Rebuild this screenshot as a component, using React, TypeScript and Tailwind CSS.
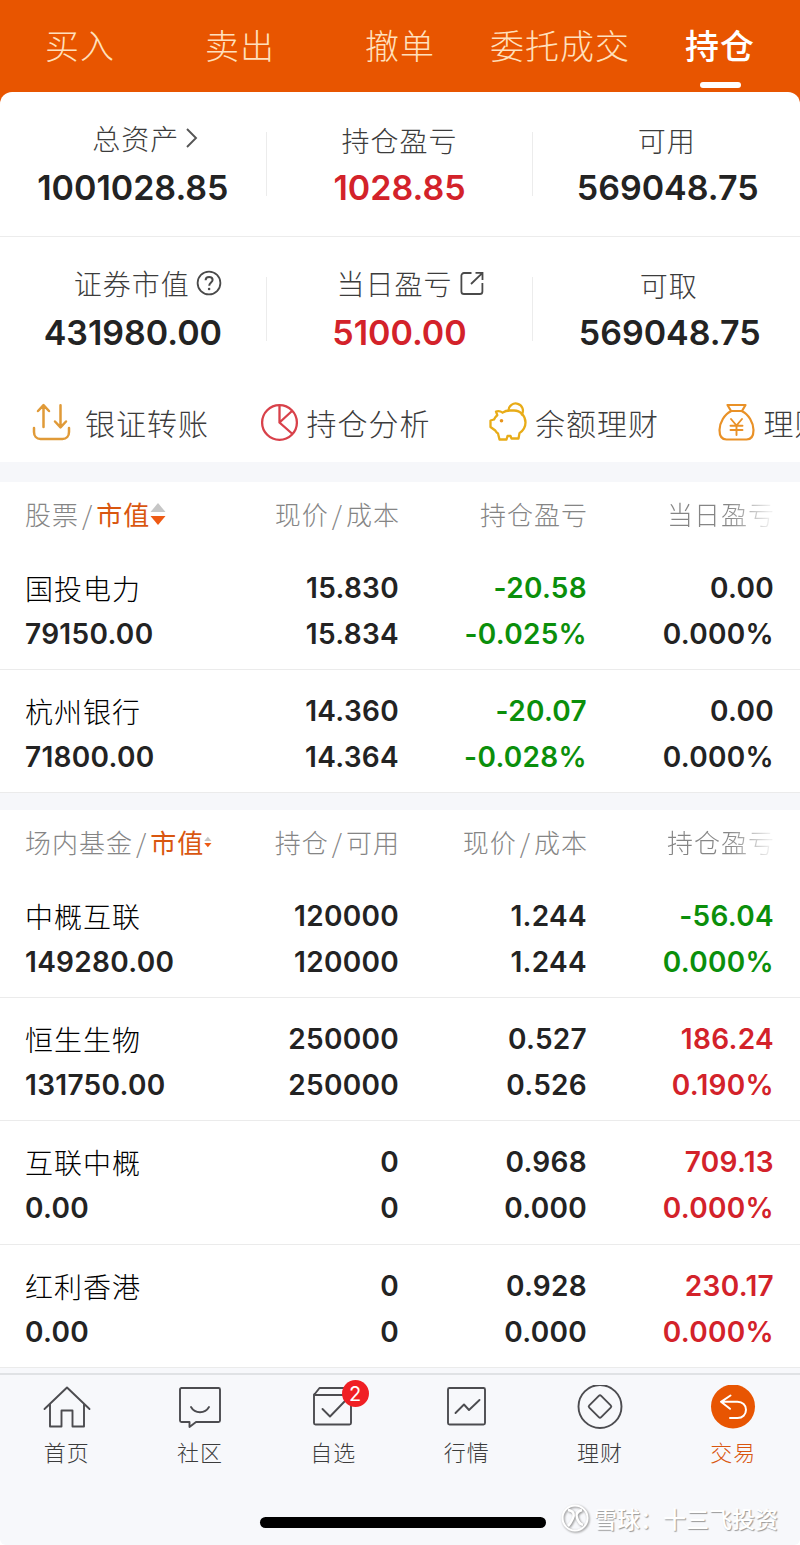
import React from 'react';

const CJK = "font-['Noto_Sans_CJK_SC',sans-serif]";
const NUM = "font-['Inter','Noto_Sans_CJK_SC',sans-serif]";

const tabs = ['买入', '卖出', '撤单', '委托成交', '持仓'];

function Chevron() {
  return (
    <svg width="14" height="20" viewBox="0 0 14 20" fill="none" stroke="#555" strokeWidth="1.9" className="ml-1.5">
      <path d="M2 1l9 9-9 9" />
    </svg>
  );
}

function Help() {
  return (
    <svg width="26" height="26" viewBox="0 0 26 26" fill="none" stroke="#4a4a4a" strokeWidth="1.8" className="ml-1.5">
      <circle cx="13" cy="13" r="11.4" />
      <path d="M9.6 10.3c0-2 1.5-3.3 3.5-3.3s3.5 1.3 3.5 3.1c0 2.3-3.4 2.8-3.4 5.6" strokeWidth="2" />
      <circle cx="13.1" cy="19" r="1.3" fill="#4a4a4a" stroke="none" />
    </svg>
  );
}

function External() {
  return (
    <svg width="26" height="26" viewBox="0 0 26 26" fill="none" stroke="#4a4a4a" strokeWidth="1.8" className="ml-1.5">
      <path d="M12.5 3H5a2.6 2.6 0 0 0-2.6 2.6v15.8A2.6 2.6 0 0 0 5 24h15.8a2.6 2.6 0 0 0 2.6-2.6V13" />
      <path d="M16.5 2.8h7V10M23 3.3L12 14" />
    </svg>
  );
}

type Stat = { label: string; value: string; red?: boolean; icon?: React.ReactNode; labelPad: string; valuePad: string };

const statRows: Stat[][] = [
  [
    { label: '总资产', value: '1001028.85', icon: <Chevron />, labelPad: 'pl-[26px] pb-1', valuePad: '' },
    { label: '持仓盈亏', value: '1028.85', red: true, labelPad: '', valuePad: '' },
    { label: '可用', value: '569048.75', labelPad: '', valuePad: 'pl-0.5' },
  ],
  [
    { label: '证券市值', value: '431980.00', icon: <Help />, labelPad: 'pl-[30px] pb-1', valuePad: '' },
    { label: '当日盈亏', value: '5100.00', red: true, icon: <External />, labelPad: 'pl-[22px] pb-1', valuePad: '' },
    { label: '可取', value: '569048.75', labelPad: 'pl-1', valuePad: 'pl-1.5' },
  ],
];

function StatRow({ row }: { row: Stat[] }) {
  return (
    <div className="grid grid-cols-3">
      {row.map((s, i) => (
        <div key={s.label} className="flex h-[144px] items-center">
          <div className="flex flex-1 flex-col items-center">
            <div className={`flex h-12 items-center text-[28px] font-light leading-none tracking-[1px] text-[#3c3c3c] ${s.labelPad}`}>
              <span>{s.label}</span>
              {s.icon}
            </div>
            <div className={`flex h-12 items-center ${NUM} text-[34px] font-semibold leading-none ${s.red ? 'text-[#d3222a]' : 'text-[#232323]'} ${s.valuePad}`}>
              {s.value}
            </div>
          </div>
          {i < 2 && <div className="h-16 w-px bg-[#ececec]" />}
        </div>
      ))}
    </div>
  );
}

function TransferIcon() {
  return (
    <svg width="40" height="40" viewBox="0 0 40 40" fill="none" stroke="#e09a38" strokeWidth="2.5" strokeLinecap="round" strokeLinejoin="round">
      <path d="M12.5 25V3.5M7 9l5.500-5.800L18 9M29.500 3.200V25M24 19.500l5.500 5.800 5.500-5.800" />
      <path d="M3 26v4c0 4 2.500 7 6.500 7h22c4 0 6.500-3 6.500-7v-4" />
    </svg>
  );
}

function PieIcon() {
  return (
    <svg width="40" height="40" viewBox="0 0 40 40" fill="none" stroke="#d8414a" strokeWidth="2.300">
      <circle cx="19.500" cy="20.500" r="17.400" />
      <path d="M19.500 3v17.500L32.500 32M19.500 20.500L32 9" />
    </svg>
  );
}

function PiggyIcon() {
  return (
    <svg width="40" height="40" viewBox="0 0 40 40" fill="none" stroke="#e8ac18" strokeWidth="2.300" strokeLinecap="round" strokeLinejoin="round">
      <path d="M8 9.500c2.500-.800 4.800-.200 6.600 1.200 2-1.500 4.500-2.200 7.400-2.200h4c6.500 0 11.500 5.300 11.500 12 0 4.500-2.500 8.200-6 10.600L30.500 36.500h-7L22.500 34h-3l-1 3.500h-7l-1.500-6c-1.200-.800-2-1.700-2.700-3L2.500 25v-6.500L6 17.500c.6-1.700 1.700-3.200 3.300-4.300z" />
      <path d="M20.500 8.500A7.200 7.200 0 1 1 33.800 12.500" />
      <circle cx="13.500" cy="18.700" r="1.800" fill="#e8941c" stroke="none" />
    </svg>
  );
}

function BagIcon() {
  return (
    <svg width="40" height="40" viewBox="0 0 40 40" fill="none" stroke="#e99127" strokeWidth="2.200" strokeLinecap="round" strokeLinejoin="round">
      <path d="M10.500 3h18l-3.500 6H14zM14 9.200C7.500 12 2.500 21 2.500 28c0 6 2.500 9.500 7 9.500h20c4.500 0 7-3.500 7-9.500 0-7-5-16-11.500-18.800" />
      <path d="M14 17l5.500 6.500L25 17M19.500 23.500V33M13.500 23.800h12M13.500 28h12" strokeWidth="1.900" />
    </svg>
  );
}

const actions = [
  { label: '银证转账', icon: <TransferIcon />, gap: 'gap-[14px]' },
  { label: '持仓分析', icon: <PieIcon />, gap: 'gap-[7px]' },
  { label: '余额理财', icon: <PiggyIcon />, gap: 'gap-[7px]' },
  { label: '理财', icon: <BagIcon />, gap: 'gap-[7px]' },
];

type Cell = { lines: [string, string]; tone?: 'green' | 'red' };
type Holding = { name: string; value: string; cells: Cell[] };

const stocks: Holding[] = [
  { name: '国投电力', value: '79150.00', cells: [{ lines: ['15.830', '15.834'] }, { lines: ['-20.58', '-0.025%'], tone: 'green' }, { lines: ['0.00', '0.000%'] }] },
  { name: '杭州银行', value: '71800.00', cells: [{ lines: ['14.360', '14.364'] }, { lines: ['-20.07', '-0.028%'], tone: 'green' }, { lines: ['0.00', '0.000%'] }] },
];

const funds: Holding[] = [
  { name: '中概互联', value: '149280.00', cells: [{ lines: ['120000', '120000'] }, { lines: ['1.244', '1.244'] }, { lines: ['-56.04', '0.000%'], tone: 'green' }] },
  { name: '恒生生物', value: '131750.00', cells: [{ lines: ['250000', '250000'] }, { lines: ['0.527', '0.526'] }, { lines: ['186.24', '0.190%'], tone: 'red' }] },
  { name: '互联中概', value: '0.00', cells: [{ lines: ['0', '0'] }, { lines: ['0.968', '0.000'] }, { lines: ['709.13', '0.000%'], tone: 'red' }] },
  { name: '红利香港', value: '0.00', cells: [{ lines: ['0', '0'] }, { lines: ['0.928', '0.000'] }, { lines: ['230.17', '0.000%'], tone: 'red' }] },
];

const GRID = 'grid grid-cols-[187px_187px_188px_187px] pl-[25px]';
const tones = { green: 'text-[#0b8f0b]', red: 'text-[#d3222a]' };

function Table({ title, heads, rows }: { title: string; heads: string[]; rows: Holding[] }) {
  return (
    <section className="bg-white">
      <div className={`${GRID} h-[65px] items-center pb-0.5 text-[26px] font-light leading-none tracking-[1px] text-[#858585]`}>
        <div className="flex items-center whitespace-nowrap">
          <span>{title}</span>
          <span className="px-[3px]">/</span>
          <span className="font-normal text-[#d9560f]">市值</span>
          <svg width="16" height="24" viewBox="0 0 16 24">
            <path d="M8 1l7.500 9H.5z" fill="#c6c6c6" />
            <path d="M8 23L.5 14h15z" fill="#ee5a14" />
          </svg>
        </div>
        {heads.map((h, i) => (
          <div
            key={h}
            className={`-mr-px text-right ${i === 2 ? 'bg-linear-to-r from-[#858585] from-75% to-[#eeeeee] to-97% bg-clip-text text-transparent' : ''}`}
          >
            {h.split('/').map((part, j) => (
              <React.Fragment key={part}>
                {j > 0 && <span className="px-[3px]">/</span>}
                {part}
              </React.Fragment>
            ))}
          </div>
        ))}
      </div>
      {rows.map((r, i) => (
        <div key={r.name} className={`${GRID} ${i === 2 ? 'h-[124px]' : 'h-[123px]'} border-b border-[#ebebeb] pt-[18px] ${NUM} text-[28px] font-semibold tracking-[0.300px] text-[#232323]`}>
          <div>
            <div className={`h-[46px] whitespace-nowrap ${CJK} font-light leading-[46px] tracking-[1px] text-black`}>{r.name}</div>
            <div className="h-[46px] leading-[46px]">{r.value}</div>
          </div>
          {r.cells.map((c, j) => (
            <div key={j} className={`text-right ${c.tone ? tones[c.tone] : ''}`}>
              {c.lines.map((l, k) => (
                <div key={k} className="h-[46px] leading-[46px]">{l}</div>
              ))}
            </div>
          ))}
        </div>
      ))}
    </section>
  );
}

const navIcons: Record<string, React.ReactNode> = {
  首页: <path d="M1.500 24L24 2.500 46.500 24M7 19v22.500h11.500V25.500h11V41.500H41V19" />,
  社区: <path d="M5.500 3h37a1.500 1.500 0 0 1 1.500 1.500v31a1.500 1.500 0 0 1-1.500 1.500H20l-6.500 5V37h-8A1.500 1.500 0 0 1 4 35.500v-31A1.500 1.500 0 0 1 5.500 3zM15 22c4 7 14 7 18 0" />,
  自选: <path d="M5 9.500V38a1.500 1.500 0 0 0 1.500 1.500h34A1.500 1.500 0 0 0 42 38V9.500M5 10l5.500-7h26l5.500 7zM13.500 24l7.500 7.500L36 16" />,
  行情: <path d="M6.500 3h34A1.500 1.500 0 0 1 42 4.500v33.500a1.500 1.500 0 0 1-1.500 1.500h-34A1.500 1.500 0 0 1 5 38V4.500A1.500 1.500 0 0 1 6.500 3zM12.500 28l8.500-8.500 5 5.500 10.500-10" />,
  理财: (
    <>
      <circle cx="24" cy="21.500" r="21.500" />
      <path d="M22.800 10.800a1.700 1.700 0 0 1 2.400 0l9.500 9.500a1.700 1.700 0 0 1 0 2.400l-9.500 9.500a1.700 1.700 0 0 1-2.400 0l-9.500-9.500a1.700 1.700 0 0 1 0-2.400z" />
    </>
  ),
  交易: (
    <>
      <circle cx="24" cy="21.500" r="22" fill="#e85502" stroke="none" />
      <path d="M21.500 10.500L12 16.800l9 7M12 16.800h16.500c5 0 8.500 3.300 8.500 8s-3.500 8.200-8.500 8.200H21" stroke="#fff" strokeWidth="2" />
    </>
  ),
};

export default function App() {
  return (
    <div className={`flex h-[1545px] w-[800px] flex-col overflow-hidden bg-white ${CJK}`}>
      <div className="bg-[#e85500]">
        <nav className="grid h-[92px] grid-cols-5">
          {tabs.map((t, i) => (
            <div key={t} className={`relative flex h-[92px] items-center justify-center pb-0.5 text-[34px] leading-none tracking-[1px] ${i === 4 ? 'font-medium text-white' : 'font-light text-[#ffe0bd]'}`}>
              <span>{t}</span>
              {i === 4 && <span className="absolute bottom-[4px] left-[60px] h-1.5 w-[41px] rounded-full bg-white" />}
            </div>
          ))}
        </nav>
        <div className="rounded-t-xl bg-white">
          <StatRow row={statRows[0]} />
        </div>
      </div>
      <div className="h-px shrink-0 bg-[#ececec]" />
      <StatRow row={statRows[1]} />
      <div className="flex h-[81px] shrink-0 overflow-hidden pl-[31px]">
        {actions.map((a) => (
          <div key={a.label} className={`flex h-[81px] w-[228.500px] shrink-0 items-center ${a.gap}`}>
            {a.icon}
            <span className="whitespace-nowrap text-[30px] font-light leading-none tracking-[1px] text-[#3c3c3c]">{a.label}</span>
          </div>
        ))}
      </div>
      <div className="h-5 shrink-0 bg-[#f6f7fa]" />
      <Table title="股票" heads={['现价/成本', '持仓盈亏', '当日盈亏']} rows={stocks} />
      <div className="h-[17px] shrink-0 bg-[#f6f7fa]" />
      <Table title="场内基金" heads={['持仓/可用', '现价/成本', '持仓盈亏']} rows={funds} />
      <div className="flex-1 rounded-b-md bg-[#f7f8fb] pt-[5px]">
        <div className="h-0.5 bg-[#e0e2e5]" />
        <div className="grid grid-cols-6 pt-2.500">
          {Object.entries(navIcons).map(([label, icon]) => (
            <div key={label} className="relative flex flex-col items-center pt-2.5">
              <svg width="48" height="46" viewBox="0 0 48 46" fill="none" stroke="#4c4c50" strokeWidth="1.900" strokeLinecap="round" strokeLinejoin="round">
                {icon}
              </svg>
              <span className={`mt-2 text-[22px] font-light leading-[24px] tracking-[1px] ${label === '交易' ? 'text-[#d9560f]' : 'text-[#3c3c3c]'}`}>{label}</span>
              {label === '自选' && (
                <span className="absolute left-[75px] top-[5px] flex h-[27px] w-[27px] items-center justify-center rounded-full bg-[#f01f24] font-['Inter',sans-serif] text-xl leading-none text-white">2</span>
              )}
            </div>
          ))}
        </div>
        <div className="flex items-center justify-end pr-[22px] pt-10">
          <div className="mr-[14px] mt-2 h-[11px] w-[286px] rounded-full bg-black" />
          <div className="flex items-center text-[23px] font-medium leading-none text-white [text-shadow:1px_1px_1px_#999]">
            <svg width="30" height="30" viewBox="0 0 30 30" fill="none" className="mr-1 drop-shadow-[1px_1px_1px_#888]">
              <circle cx="15" cy="15" r="12.500" stroke="#fff" strokeWidth="2" />
              <path d="M8 7c7 1 6 6 5 8s-2 5-5 8M22 7c-6 2-6 5-5 8s2 6 6 7" stroke="#fff" strokeWidth="2.500" />
            </svg>
            雪球：十三飞投资
          </div>
        </div>
      </div>
    </div>
  );
}
